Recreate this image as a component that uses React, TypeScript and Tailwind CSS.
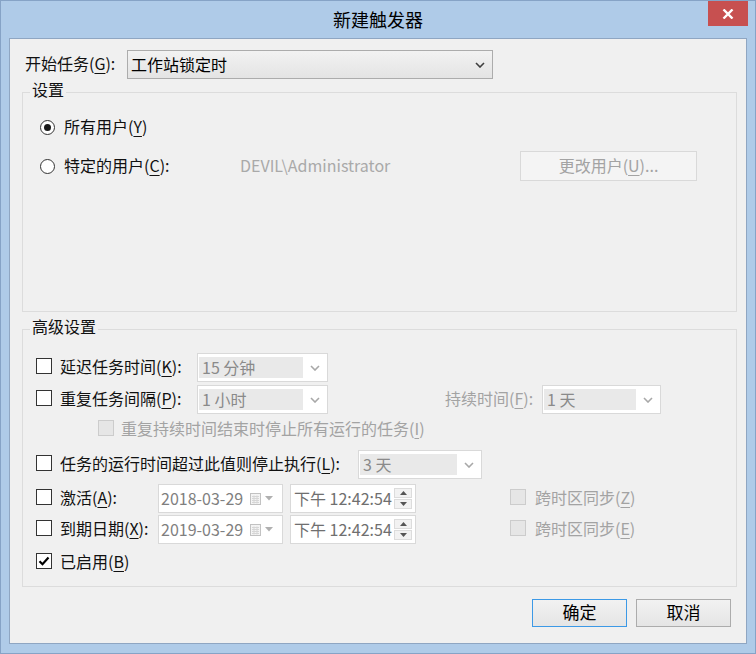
import React from "react";

const Mn = ({ children }: { children: React.ReactNode }) => (
  <span className="underline decoration-1 underline-offset-[3px]">{children}</span>
);

const Chevron = ({ className }: { className?: string }) => (
  <svg width="10" height="6" viewBox="0 0 10 6" className={className}>
    <path d="M1 1l4 4 4-4" fill="none" stroke="currentColor" strokeWidth="1.6" />
  </svg>
);

const Check = ({ checked, disabled }: { checked?: boolean; disabled?: boolean }) => (
  <span
    className={`flex h-[16px] w-[16px] shrink-0 items-center justify-center border ${
      disabled ? "border-[#cccccc] bg-[#e6e6e6]" : "border-[#333333] bg-white"
    }`}
  >
    {checked && (
      <svg width="12" height="10" viewBox="0 0 12 10">
        <path d="M1.5 5.2l3 3 6-6.6" fill="none" stroke="#000" strokeWidth="2.2" />
      </svg>
    )}
  </span>
);

const Radio = ({ checked }: { checked?: boolean }) => (
  <span className="flex h-[15px] w-[15px] shrink-0 items-center justify-center rounded-full border border-[#333333] bg-white">
    {checked && <span className="h-[7px] w-[7px] rounded-full bg-[#1a1a1a]" />}
  </span>
);

// checkbox + label, nudged a little above the row centre like the native dialog
const CheckLabel = ({
  children,
  checked,
  disabled,
  w,
  gap = "ml-[8px]",
}: {
  children: React.ReactNode;
  checked?: boolean;
  disabled?: boolean;
  w?: string;
  gap?: string;
}) => (
  <div className={`flex shrink-0 items-center pb-[4px] ${w ?? ""}`}>
    <Check checked={checked} disabled={disabled} />
    <span className={`${gap} ${disabled ? "text-[#a3a3a3]" : ""}`}>{children}</span>
  </div>
);

interface ComboProps {
  text: string;
  w: string;
}

const Combo = ({ text, w }: ComboProps) => (
  <div className={`flex h-[29px] shrink-0 border border-[#d9d9d9] bg-white py-[3px] pl-[1px] ${w}`}>
    <div className="flex flex-1 items-center bg-[#e9e9e9] pb-[2px] pl-[3px] text-[#8a8a8a]">{text}</div>
    <div className="flex w-[24px] items-center justify-center text-[#a8a8a8]">
      <Chevron />
    </div>
  </div>
);

const DateField = ({ value }: { value: string }) => (
  <div className="flex h-[29px] w-[125px] shrink-0 items-center border border-[#d9d9d9] bg-white pl-[2px] text-[#7f7f7f]">
    <span className="flex-1 pb-[1px]">{value}</span>
    <svg width="11" height="12" viewBox="0 0 11 12" className="mr-[4px]">
      <rect x="0.5" y="0.5" width="10" height="11" fill="#f4f4f4" stroke="#c2c2c2" />
      <path d="M2 3.5h7M2 5.5h7M2 7.5h7M2 9.5h7M4 2.5v8M7 2.5v8" stroke="#d6d6d6" strokeWidth="1" />
    </svg>
    <svg width="8" height="5" viewBox="0 0 8 5" className="mr-[9px]">
      <path d="M0 0h8L4 4.5z" fill="#b0b0b0" />
    </svg>
  </div>
);

const TimeField = ({ value }: { value: string }) => (
  <div className="ml-[7px] flex h-[29px] w-[126px] shrink-0 items-center border border-[#d9d9d9] bg-white pl-[3px] text-[#6f6f6f]">
    <span className="flex-1 pb-[1px]">{value}</span>
    <div className="mr-[3px] flex h-[21px] w-[18px] flex-col gap-[1px]">
      <div className="flex flex-1 items-center justify-center border border-[#dcdcdc] bg-[#f2f2f2]">
        <svg width="7" height="4" viewBox="0 0 7 4">
          <path d="M0 4h7L3.5 0z" fill="#555" />
        </svg>
      </div>
      <div className="flex flex-1 items-center justify-center border border-[#dcdcdc] bg-[#f2f2f2]">
        <svg width="7" height="4" viewBox="0 0 7 4">
          <path d="M0 0h7L3.5 4z" fill="#555" />
        </svg>
      </div>
    </div>
  </div>
);

const App = () => {
  return (
    <div className="flex h-[654px] w-[756px] flex-col border border-[#86a3c6] bg-[#afcbe8] font-['Noto_Sans_CJK_SC','Noto_Sans',sans-serif] text-[16px] leading-[20px] text-[#111]">
      {/* title bar */}
      <div className="relative flex h-[37px] shrink-0 items-center justify-center pb-[2px]">
        <span className="text-[18px] text-black">新建触发器</span>
        <div className="absolute right-[7px] top-0 flex h-[25px] w-[40px] items-center justify-center bg-[#c75050]">
          <svg width="12" height="10" viewBox="0 0 12 10">
            <path d="M1.5 0.5l9 9M10.5 0.5l-9 9" stroke="#fff" strokeWidth="2.4" />
          </svg>
        </div>
      </div>

      {/* client area */}
      <div className="mx-[8px] mb-[9px] flex flex-1 flex-col border border-[#8fa6c2] bg-[#f0f0f0]">
        <div className="flex items-center pl-[15px] pt-[11px]">
          <span className="w-[102px] pb-[3px]">
            开始任务(<Mn>G</Mn>):
          </span>
          <div className="flex h-[29px] w-[366px] items-center border border-[#acacac] bg-linear-to-b from-[#f2f2f2] to-[#e4e4e4] pl-[3px] pr-[7px]">
            <span className="flex-1 pb-[2px] text-black">工作站锁定时</span>
            <Chevron className="text-[#3f3f3f]" />
          </div>
        </div>

        {/* 设置 */}
        <fieldset className="ml-[12px] mr-[9px] border border-[#dcdcdc]">
          <legend className="ml-[7px] px-[2px] pb-[6px] leading-[20px]">设置</legend>
          <div className="flex h-[206px] flex-col pl-[17px]">
            <div className="mt-[10px] flex h-[24px] items-center gap-[9px]">
              <Radio checked />
              <span className="pb-[2px]">
                所有用户(<Mn>Y</Mn>)
              </span>
            </div>
            <div className="mt-[12px] flex h-[30px] items-center">
              <Radio />
              <span className="ml-[9px] w-[176px] pb-[2px]">
                特定的用户(<Mn>C</Mn>):
              </span>
              <span className="w-[280px] pb-[2px] text-[#a9a9a9]">DEVIL\Administrator</span>
              <div className="flex h-[30px] w-[177px] items-center justify-center border border-[#d9d9d9] bg-[#f4f4f4] pb-[2px] text-[#a3a3a3]">
                更改用户(<Mn>U</Mn>)...
              </div>
            </div>
          </div>
        </fieldset>

        {/* 高级设置 */}
        <fieldset className="ml-[12px] mr-[9px] mt-[4px] border border-[#dcdcdc]">
          <legend className="ml-[7px] px-[2px] pb-[6px] leading-[20px]">高级设置</legend>
          <div className="flex h-[244px] flex-col pl-[13px]">
            <div className="mt-[11px] flex h-[29px] items-center">
              <CheckLabel w="w-[161px]">
                延迟任务时间(<Mn>K</Mn>):
              </CheckLabel>
              <Combo text="15 分钟" w="w-[131px]" />
            </div>

            <div className="mt-[3px] flex h-[29px] items-center">
              <CheckLabel w="w-[161px]">
                重复任务间隔(<Mn>P</Mn>):
              </CheckLabel>
              <Combo text="1 小时" w="w-[131px]" />
              <span className="ml-[117px] w-[97px] pb-[4px] text-[#a3a3a3]">
                持续时间(<Mn>F</Mn>):
              </span>
              <Combo text="1 天" w="w-[119px]" />
            </div>

            <div className="flex h-[32px] items-center pl-[62px]">
              <CheckLabel disabled gap="ml-[7px]">
                重复持续时间结束时停止所有运行的任务(<Mn>I</Mn>)
              </CheckLabel>
            </div>

            <div className="mt-[4px] flex h-[29px] items-center">
              <CheckLabel w="w-[322px]">
                任务的运行时间超过此值则停止执行(<Mn>L</Mn>):
              </CheckLabel>
              <Combo text="3 天" w="w-[124px]" />
            </div>

            <div className="mt-[5px] flex h-[29px] items-center">
              <CheckLabel w="w-[122px]">
                激活(<Mn>A</Mn>):
              </CheckLabel>
              <DateField value="2018-03-29" />
              <TimeField value="下午 12:42:54" />
              <div className="ml-[94px]">
                <CheckLabel disabled gap="ml-[9px]">
                  跨时区同步(<Mn>Z</Mn>)
                </CheckLabel>
              </div>
            </div>

            <div className="mt-[2px] flex h-[29px] items-center">
              <CheckLabel w="w-[122px]">
                到期日期(<Mn>X</Mn>):
              </CheckLabel>
              <DateField value="2019-03-29" />
              <TimeField value="下午 12:42:54" />
              <div className="ml-[94px]">
                <CheckLabel disabled gap="ml-[9px]">
                  跨时区同步(<Mn>E</Mn>)
                </CheckLabel>
              </div>
            </div>

            <div className="mt-[4px] flex h-[29px] items-center">
              <CheckLabel checked>
                已启用(<Mn>B</Mn>)
              </CheckLabel>
            </div>
          </div>
        </fieldset>

        <div className="mt-[12px] flex justify-end gap-[9px] pr-[15px]">
          <button className="flex h-[28px] w-[95px] items-center justify-center border border-[#3c99e6] bg-linear-to-b from-[#f2f2f2] to-[#e5e5e5] pb-[2px] text-[17px] text-black">
            确定
          </button>
          <button className="flex h-[28px] w-[95px] items-center justify-center border border-[#acacac] bg-linear-to-b from-[#f2f2f2] to-[#e5e5e5] pb-[2px] text-[17px] text-black">
            取消
          </button>
        </div>
      </div>
    </div>
  );
};

export default App;
